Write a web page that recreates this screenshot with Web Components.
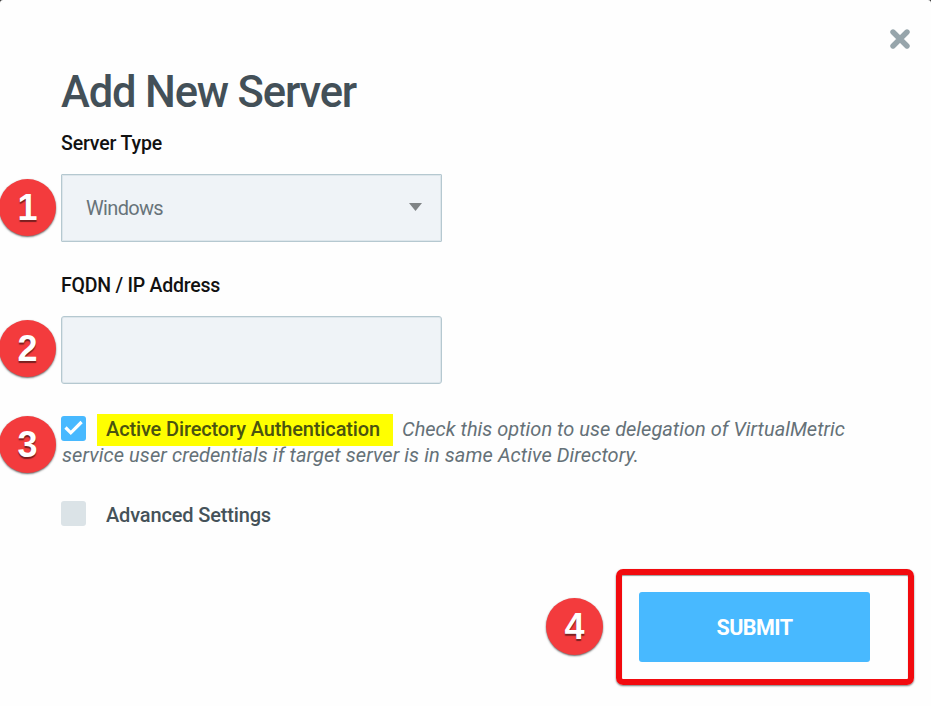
<!DOCTYPE html>
<html lang="en"><head><meta charset="utf-8"><title>Add New Server</title>
<style>
html,body{margin:0;height:100%;background:#333}
body{overflow:hidden;font-family:Roboto,"Noto Sans",sans-serif}
</style></head><body>
<server-dialog></server-dialog>
<script>
const define = (name, html, setup) => {
  const t = document.createElement('template');
  t.innerHTML = html;
  customElements.define(name, class extends HTMLElement {
    constructor() {
      super();
      this.attachShadow({mode: 'open'}).append(t.content.cloneNode(true));
    }
    connectedCallback() { if (setup) setup(this); }
  });
};

/* A single line of text tracked to the width given in its "width" attribute. */
define('tracked-text', `<style>:host{display:inline-block;white-space:pre}</style><slot></slot>`, el => {
  const want = +el.getAttribute('width');
  const have = el.getBoundingClientRect().width;
  el.style.letterSpacing = (want - have) / el.textContent.length + 'px';
});

define('step-badge', `<style>
:host{position:absolute;display:flex;align-items:center;justify-content:center;width:57px;height:57px;border-radius:50%;background:#f33b3d;color:#fff;font:700 36px/57px "Liberation Sans",Arial,sans-serif;box-shadow:0 1px 2px #666;text-shadow:0 1.5px 1px #7a2020}
</style><slot></slot>`);

define('field-label', `<style>:host{display:block;height:24px;font-size:19.5px;line-height:24px;font-weight:500;color:#111}</style><slot></slot>`);

define('field-box', `<style>
:host{display:flex;box-sizing:border-box;width:381px;height:68px;border:1px solid #b5c8d0;box-shadow:inset 0 0 0 1px #dde6eb;border-radius:3px;background:#eff3f7;align-items:center;justify-content:space-between;padding:0 19px 1px 24px;font-size:20px;color:#68737a}
:host([square]){border-radius:1px}
</style><slot></slot>`);

define('drop-arrow', `<style>:host{display:block;width:13px;height:8px;margin-top:-2px}svg{display:block}</style>
<svg width="13" height="8"><path d="M0 0H13L6.5 8Z" fill="#808486"/></svg>`);

define('check-box', `<style>
:host{display:block;width:25px;height:25px;border-radius:3px;background:#dbe3e7}
:host([checked]){background:#48b9ff}
svg{display:none}:host([checked]) svg{display:block}
</style><svg width="25" height="25" viewBox="0 0 25 25"><path d="M4.5 11.5L9.8 16.8L20.6 6" fill="none" stroke="#fff" stroke-width="3.2"/></svg>`);

define('close-icon', `<style>:host{display:block;width:20px;height:20px}svg{display:block}</style>
<svg width="20" height="20"><path d="M3 3L17 17M17 3L3 17" stroke="#97a5ab" stroke-width="5.4" stroke-linecap="round"/></svg>`);

define('submit-button', `<style>
:host{display:block;width:231px;height:70px}
button{display:flex;align-items:center;justify-content:center;width:100%;height:100%;border:0;border-radius:3px;background:#48b9ff;color:#fff;font:700 21.5px/30px Roboto,sans-serif;padding:1px 0 0}
</style><button><slot></slot></button>`);

define('highlight-frame', `<style>
:host{display:block;box-sizing:border-box;width:298px;height:116px;padding:17px 0 0 17px;border:6px solid #f20a0e;border-radius:7px;box-shadow:0 1px 2px #777,inset 0 1px 1px #999}
</style><slot></slot>`);

define('server-dialog', `<style>
:host{position:relative;display:block;box-sizing:border-box;width:931px;height:706px;background:#fefefe;border-radius:3px 3px 0 0;overflow:hidden;color:#455259}
header{display:flex;justify-content:flex-end;height:68px;box-sizing:border-box;padding:29px 21px 0 0}
main{padding-left:61px}
h1{margin:0;height:50px;font-size:43.5px;line-height:50px;font-weight:500;color:#435058}
.first{margin-top:14px}.second{margin-top:32px}
field-box{margin-top:18px}
.option{display:grid;grid-template-columns:36px 296px auto;margin-top:30px;font-size:20px;line-height:31px}
.option check-box{margin-top:2px}
mark{height:32px;background:#ff0;color:#4a5310;padding-left:9px;font-weight:500}
.hint{font-style:italic;color:#657178;padding-left:9px}
.more{font-style:italic;color:#657178;font-size:20px;line-height:24px;height:24px;margin-left:1px;margin-top:-3px}
.advanced{display:flex;gap:20px;height:26px;font-size:20px;line-height:29px;font-weight:500;margin-top:34px}
footer{display:flex;justify-content:flex-end;padding:42px 17px 0 0}
</style>
<header><close-icon></close-icon></header>
<main>
<h1><tracked-text width="295">Add New Server</tracked-text></h1>
<field-label class="first"><tracked-text width="101">Server Type</tracked-text></field-label>
<field-box square><tracked-text width="77">Windows</tracked-text><drop-arrow></drop-arrow></field-box>
<field-label class="second"><tracked-text width="159">FQDN / IP Address</tracked-text></field-label>
<field-box></field-box>
<div class="option"><check-box checked></check-box><mark><tracked-text width="274">Active Directory Authentication</tracked-text></mark><span class="hint"><tracked-text width="443">Check this option to use delegation of VirtualMetric</tracked-text></span></div>
<div class="more"><tracked-text width="577">service user credentials if target server is in same Active Directory.</tracked-text></div>
<div class="advanced"><check-box></check-box><tracked-text width="165">Advanced Settings</tracked-text></div>
</main>
<footer><highlight-frame><submit-button><tracked-text width="76">SUBMIT</tracked-text></submit-button></highlight-frame></footer>
<step-badge style="left:-1px;top:179px">1</step-badge>
<step-badge style="left:-1px;top:320px">2</step-badge>
<step-badge style="left:-1px;top:416px">3</step-badge>
<step-badge style="left:546px;top:598px">4</step-badge>`);
</script></body></html>
